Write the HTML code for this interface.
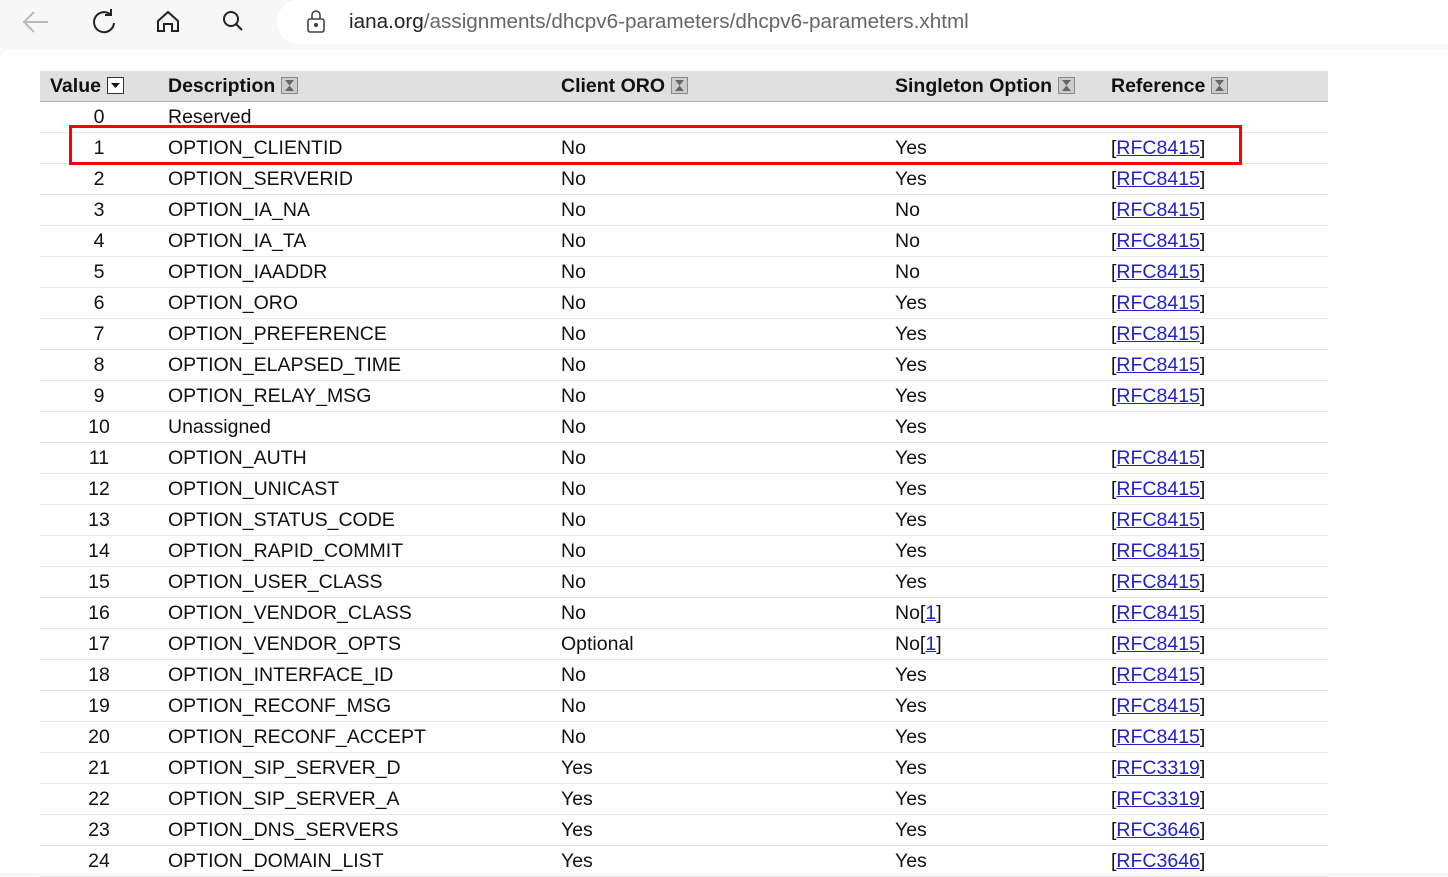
<!DOCTYPE html>
<html><head><style>
body{margin:0;width:1448px;height:873px;overflow:hidden;background:#f7f7f7;font-family:"Liberation Sans",sans-serif;position:relative}
.bar{position:absolute;left:0;top:0;width:1448px;height:48px;background:#f7f7f7}
.url{position:absolute;left:277px;top:0;width:1200px;height:44px;background:#fff;border-radius:22px}
.url span{position:absolute;left:72px;top:10px;font-size:20.7px;color:#222}
.url span i{font-style:normal;color:#666}
.page{position:absolute;left:0;top:50px;width:1448px;height:823px;background:#fff;border-top-left-radius:10px}
table{position:absolute;left:40px;top:71px;width:1288px;border-collapse:collapse;table-layout:fixed;font-size:19.5px;color:#111}
th{background:#e0e0e0;height:30px;text-align:left;font-weight:bold;border-bottom:1px solid #aaa;padding:2px 0 0 0;box-sizing:border-box}
td{height:31px;border-bottom:1px solid #e6e6ee;padding:2px 0 0 0;box-sizing:border-box}
.s{display:inline-block;width:15px;height:15px;border:1px solid #888;background:#ccc;vertical-align:-2px;margin-left:6px;position:relative}
a{color:#2222cc;text-decoration:underline}
.box{position:absolute;left:69px;top:125px;width:1167px;height:34px;border:3px solid #f00}
td:first-child{text-align:center;padding-right:10px}
</style></head><body>
<div class="bar">
<svg width="280" height="44" style="position:absolute;left:0;top:0" fill="none" stroke-width="2">
<path d="M48 22H25M34 12l-10 10 10 10" stroke="#bbb"/>
<path d="M111 15a10 10 0 1 0 3 8M111 9v6h-6" stroke="#222"/>
<path d="M158 21l10-9 10 9v10h-6v-7h-8v7h-6z" stroke="#222"/>
<circle cx="231" cy="19" r="7" stroke="#222"/><path d="M236 24l6 6" stroke="#222"/>
</svg>
<div class="url"><svg width="24" height="26" style="position:absolute;left:28px;top:9px" fill="none" stroke="#444" stroke-width="1.6"><rect x="3" y="10" width="16" height="13" rx="2"/><path d="M7 10V6a4 4 0 0 1 8 0v4"/><circle cx="11" cy="16" r="1.3" fill="#444"/></svg><span>iana.org<i>/assignments/dhcpv6-parameters/dhcpv6-parameters.xhtml</i></span></div>
</div>
<div class="page"></div>
<svg width="0" height="0" style="position:absolute"><defs><symbol id="hg" viewBox="0 0 15 15"><path d="M3 2h9l-4.5 5.5zM3 13h9l-4.5-5.5z" fill="#666"/></symbol></defs></svg>
<table>
<colgroup><col style="width:128px"><col style="width:393px"><col style="width:334px"><col style="width:216px"><col></colgroup>
<tr><th style="padding-left:10px;text-align:left">Value<span class="s" style="background:#fff;border-color:#333"><svg width="15" height="15" style="position:absolute;left:0;top:0"><path d="M3 5h9l-4.5 5z" fill="#111"/></svg></span></th><th>Description<span class="s"><svg width="15" height="15" style="position:absolute;left:0;top:0"><use href="#hg"/></svg></span></th><th>Client ORO<span class="s"><svg width="15" height="15" style="position:absolute;left:0;top:0"><use href="#hg"/></svg></span></th><th>Singleton Option<span class="s"><svg width="15" height="15" style="position:absolute;left:0;top:0"><use href="#hg"/></svg></span></th><th>Reference<span class="s"><svg width="15" height="15" style="position:absolute;left:0;top:0"><use href="#hg"/></svg></span></th></tr>
<tr><td>0</td><td>Reserved</td><td></td><td></td><td></td></tr>
<tr><td>1</td><td>OPTION_CLIENTID</td><td>No</td><td>Yes</td><td>[<a>RFC8415</a>]</td></tr>
<tr><td>2</td><td>OPTION_SERVERID</td><td>No</td><td>Yes</td><td>[<a>RFC8415</a>]</td></tr>
<tr><td>3</td><td>OPTION_IA_NA</td><td>No</td><td>No</td><td>[<a>RFC8415</a>]</td></tr>
<tr><td>4</td><td>OPTION_IA_TA</td><td>No</td><td>No</td><td>[<a>RFC8415</a>]</td></tr>
<tr><td>5</td><td>OPTION_IAADDR</td><td>No</td><td>No</td><td>[<a>RFC8415</a>]</td></tr>
<tr><td>6</td><td>OPTION_ORO</td><td>No</td><td>Yes</td><td>[<a>RFC8415</a>]</td></tr>
<tr><td>7</td><td>OPTION_PREFERENCE</td><td>No</td><td>Yes</td><td>[<a>RFC8415</a>]</td></tr>
<tr><td>8</td><td>OPTION_ELAPSED_TIME</td><td>No</td><td>Yes</td><td>[<a>RFC8415</a>]</td></tr>
<tr><td>9</td><td>OPTION_RELAY_MSG</td><td>No</td><td>Yes</td><td>[<a>RFC8415</a>]</td></tr>
<tr><td>10</td><td>Unassigned</td><td>No</td><td>Yes</td><td></td></tr>
<tr><td>11</td><td>OPTION_AUTH</td><td>No</td><td>Yes</td><td>[<a>RFC8415</a>]</td></tr>
<tr><td>12</td><td>OPTION_UNICAST</td><td>No</td><td>Yes</td><td>[<a>RFC8415</a>]</td></tr>
<tr><td>13</td><td>OPTION_STATUS_CODE</td><td>No</td><td>Yes</td><td>[<a>RFC8415</a>]</td></tr>
<tr><td>14</td><td>OPTION_RAPID_COMMIT</td><td>No</td><td>Yes</td><td>[<a>RFC8415</a>]</td></tr>
<tr><td>15</td><td>OPTION_USER_CLASS</td><td>No</td><td>Yes</td><td>[<a>RFC8415</a>]</td></tr>
<tr><td>16</td><td>OPTION_VENDOR_CLASS</td><td>No</td><td>No[<a>1</a>]</td><td>[<a>RFC8415</a>]</td></tr>
<tr><td>17</td><td>OPTION_VENDOR_OPTS</td><td>Optional</td><td>No[<a>1</a>]</td><td>[<a>RFC8415</a>]</td></tr>
<tr><td>18</td><td>OPTION_INTERFACE_ID</td><td>No</td><td>Yes</td><td>[<a>RFC8415</a>]</td></tr>
<tr><td>19</td><td>OPTION_RECONF_MSG</td><td>No</td><td>Yes</td><td>[<a>RFC8415</a>]</td></tr>
<tr><td>20</td><td>OPTION_RECONF_ACCEPT</td><td>No</td><td>Yes</td><td>[<a>RFC8415</a>]</td></tr>
<tr><td>21</td><td>OPTION_SIP_SERVER_D</td><td>Yes</td><td>Yes</td><td>[<a>RFC3319</a>]</td></tr>
<tr><td>22</td><td>OPTION_SIP_SERVER_A</td><td>Yes</td><td>Yes</td><td>[<a>RFC3319</a>]</td></tr>
<tr><td>23</td><td>OPTION_DNS_SERVERS</td><td>Yes</td><td>Yes</td><td>[<a>RFC3646</a>]</td></tr>
<tr><td>24</td><td>OPTION_DOMAIN_LIST</td><td>Yes</td><td>Yes</td><td>[<a>RFC3646</a>]</td></tr>
</table>
<div class="box"></div>
</body></html>
